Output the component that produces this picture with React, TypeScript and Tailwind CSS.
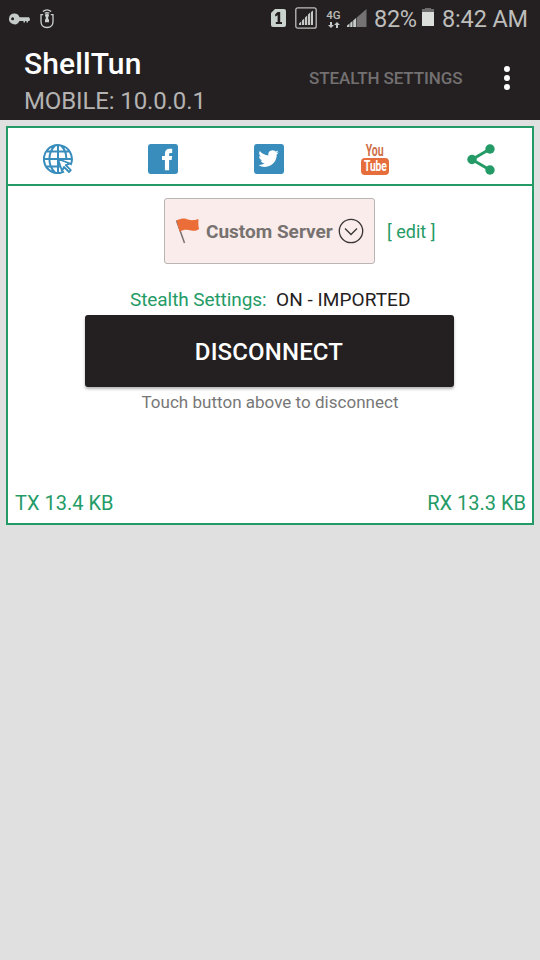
import React from "react";

function StatusBar() {
  return (
    <div className="flex h-[38px] items-center text-[#bdbdbb]">
      <svg className="ml-[9px] h-[12px] w-[21px] shrink-0" viewBox="0 0 21 12">
        <path fill="#c5cbc9" fillRule="evenodd" d="M5.5.5a5.4 5.4 0 1 0 4.9 7.500h4.100v1.500h1.500V8h1.500v1.500H19V8h1.500L21 6l-1-1.700h-9.400A5.400 5.400 0 0 0 5.500.5ZM3.600 4.300a1.500 1.500 0 1 1 0 3 1.500 1.500 0 0 1 0-3Z" />
      </svg>
      <svg className="ml-[10px] h-[20px] w-[14px] shrink-0" viewBox="0 0 14 20" fill="none" stroke="#cbd0ce" strokeWidth="1.300">
        <path d="M2.800 2.500Q7-.9 11.200 2.500M4.700 4.300Q7 2.800 9.300 4.300M3.200 5.700H1v6.800c0 3.800 2.500 6 6 6s6-2.200 6-6V5.700h-2.200" />
        <path stroke="none" fill="#cbd0ce" d="M7 4.500a2 2 0 0 1 1.200 3.600v2.100H9v3H5v-3h.8V8.100A2 2 0 0 1 7 4.500Z" />
      </svg>
      <svg className="ml-[217px] h-[18px] w-[15px] shrink-0 -translate-y-px" viewBox="0 0 15 18">
        <path fill="#cbd3cf" d="M4 0h9a2 2 0 0 1 2 2v14a2 2 0 0 1-2 2H2a2 2 0 0 1-2-2V4Z" />
        <path fill="#242021" d="M6.600 3h2.600v10h1.800v2H4.800v-2h1.800V6.300L4.200 7.500v-2.300Z" />
      </svg>
      <svg className="ml-[9px] h-[22px] w-[22px] shrink-0 -translate-y-px" viewBox="0 0 22 22">
        <rect x=".8" y=".8" width="20.400" height="20.400" rx="2" fill="none" stroke="#bdbdbb" strokeWidth="1.300" />
        <path fill="#c7c9c6" d="M4 18v-1.500l2.200-2V18zM7 18v-4.500l2.200-2V18zM10 18v-7.500l2.200-2V18zM13 18V7.500l2.200-2V18zM16 18V5l2-1.500V18z" />
      </svg>
      <div className="ml-[9px] flex w-[15px] shrink-0 -translate-y-px flex-col items-center">
        <span className="text-[11.500px] font-medium leading-[12px]">4G</span>
        <svg className="mt-[1px] h-[6px] w-[12px]" viewBox="0 0 12 6" fill="#c7c9c6">
          <path d="M2 0h2v3h2L3 6 0 3h2zM8 6h2V3h2L9 0 6 3h2z" />
        </svg>
      </div>
      <svg className="ml-[6px] h-[18px] w-[20px] shrink-0 -translate-y-px" viewBox="0 0 20 18">
        <path fill="#757273" d="M9.500 8.800 19.500 0v18h-10z" />
        <path fill="#c5cbc9" d="M0 18v-1.500l2.500-2V18zM3.200 18v-4l2.300-2v6zM6.200 18v-6.500L9 9v9z" />
      </svg>
      <span className="ml-[7px] w-[43px] shrink-0 whitespace-nowrap text-[23.500px] leading-6 tracking-[-.3px]">82%</span>
      <svg className="ml-[5px] h-[18px] w-[12px] shrink-0 -translate-y-0.5" viewBox="0 0 12 18">
        <path fill="#6f6c6d" d="M3 0h6v1h3v4H0V1h3z" />
        <path fill="#dcdedb" d="M0 4h12v14H0z" />
      </svg>
      <span className="ml-[8px] whitespace-nowrap text-[23.500px] leading-6 tracking-[-.15px]">8:42 AM</span>
    </div>
  );
}

function Header() {
  return (
    <header className="h-[120px] bg-[#242021]">
      <StatusBar />
      <div className="flex h-[82px] pl-[24px]">
        <div className="w-[285px] pt-[8px]">
          <h1 className="whitespace-nowrap text-[30px] font-medium leading-[36px] tracking-[.1px] text-white">ShellTun</h1>
          <p className="mt-[4px] whitespace-nowrap text-[24px] leading-[30px] tracking-[-.12px] text-[#b4b3b2]">MOBILE: 10.0.0.1</p>
        </div>
        <span className="mt-[30px] w-[194px] whitespace-nowrap text-[17px] font-medium leading-5 tracking-[-.1px] text-[#737071]">STEALTH SETTINGS</span>
        <button className="mt-[28px] flex h-[24px] w-[8px] flex-col items-center justify-between" aria-label="More options">
          <i className="size-[6px] rounded-full bg-white" />
          <i className="size-[6px] rounded-full bg-white" />
          <i className="size-[6px] rounded-full bg-white" />
        </button>
      </div>
    </header>
  );
}

function SocialLinks() {
  return (
    <nav className="flex h-[58px] items-center border-b-2 border-[#249b66] pl-[35px] pt-[6px]">
      <svg className="size-[30px]" viewBox="0 0 30 30" fill="none" stroke="#388dbd" strokeWidth="2">
        <path d="M27.600 21A14 14 0 1 0 21 27.700M4 7.500h22M1 15h28M4 22.500h14M15 1v28M12 1.500C4.500 9 4.500 21 12 28.500M18 1.500c4 4 5.500 8.700 5.300 13.500" />
        <path fill="white" strokeWidth="1.800" strokeLinejoin="round" d="m15 15 12 4.500-4.200 1.700 5 5-1.800 1.800-5-5L19 27Z" />
      </svg>
      <svg className="ml-[75px] size-[30px]" viewBox="0 0 31 31">
        <rect width="31" height="31" rx="3" fill="#388dbd" />
        <path fill="white" d="M17.500 27V16.500h-3v-4h3V10c0-3.500 1.800-5 5-5H25v4.200h-1.500c-1.300 0-1.700.5-1.700 1.600v1.700H25l-.6 4h-2.600V27Z" />
      </svg>
      <svg className="ml-[76px] size-[30px]" viewBox="0 0 31 31">
        <rect width="31" height="31" rx="3" fill="#388dbd" />
        <path transform="translate(4.500 4.500) scale(.88)" fill="white" d="M23.950 4.570a10 10 0 0 1-2.820.77 4.960 4.960 0 0 0 2.160-2.720c-.95.550-2 .950-3.120 1.180a4.920 4.920 0 0 0-8.380 4.480C7.690 8.090 4.070 6.130 1.640 3.160a4.820 4.820 0 0 0-.67 2.480c0 1.710.87 3.210 2.190 4.100a4.900 4.900 0 0 1-2.230-.62v.06a4.920 4.920 0 0 0 3.950 4.830 5 5 0 0 1-2.210.08 4.940 4.940 0 0 0 4.600 3.420A9.870 9.870 0 0 1 0 19.540a14 14 0 0 0 7.550 2.210c9.050 0 14-7.500 14-13.980 0-.21 0-.42-.02-.63a9.940 9.940 0 0 0 2.420-2.570Z" />
      </svg>
      <div className="ml-[77px] flex w-[28px] flex-col items-center">
        <span className="h-[14px] scale-x-[.66] whitespace-nowrap text-[16px] font-bold leading-[13px] text-[#cf7048]">You</span>
        <span className="flex h-[17px] w-[28px] items-center justify-center rounded-[4px] bg-[#e66d3c]">
          <span className="scale-x-[.66] whitespace-nowrap text-[15.500px] font-bold leading-[16px] text-white">Tube</span>
        </span>
      </div>
      <svg className="ml-[78px] h-[31px] w-[28px]" viewBox="0 0 28 31" fill="#249b66">
        <path d="M23 5 5 15.500 23 26" fill="none" stroke="#249b66" strokeWidth="3" />
        <circle cx="23" cy="5" r="4.700" /><circle cx="5" cy="15.500" r="4.700" /><circle cx="23" cy="26" r="4.700" />
      </svg>
    </nav>
  );
}

function ServerPicker() {
  return (
    <div className="mt-[12px] flex items-center pl-[156px]">
      <button className="flex h-[66px] w-[211px] items-center rounded-[3px] border border-[#b9b5b5] bg-[#f9eceb] pl-[10px]">
        <svg className="h-[26px] w-[26px] shrink-0" viewBox="0 0 26 26">
          <path d="m1.500 2.500 8 22.500" stroke="#77716f" strokeWidth="1.500" />
          <path fill="#eb6d37" d="M1.500 2.500C8-.5 10 .5 13 1.500s6 1 10.500-.5c-.3 3-.3 7 .7 10-3 2-5 2-8 1.500-4-.8-7-1.500-11.500 1.200Z" />
        </svg>
        <span className="ml-[5px] mt-[2px] w-[128px] whitespace-nowrap text-left text-[19px] font-bold leading-6 text-[#777270]">Custom Server</span>
        <svg className="ml-[4px] size-[26px] shrink-0" viewBox="0 0 26 26" fill="none" stroke="#393534" strokeWidth="1.300">
          <circle cx="13" cy="13" r="11.700" /><path d="m7 10.500 6 6 6-6" />
        </svg>
      </button>
      <a className="ml-[12px] mt-[2px] whitespace-nowrap text-[18px] leading-6 text-[#249b66]">[ edit ]</a>
    </div>
  );
}

export default function App() {
  return (
    <div className="min-h-[960px] w-[540px] overflow-hidden bg-[#e0e0e0] font-['Roboto',sans-serif]">
      <Header />
      <main className="mx-[6px] mt-[6px] flex h-[399px] flex-col border-2 border-[#249b66] bg-white">
        <SocialLinks />
        <ServerPicker />
        <div className="mt-[24px] flex h-[24px] whitespace-nowrap pl-[122px] text-[19px] leading-6">
          <span className="w-[146px] tracking-[-.08px] text-[#249b66]">Stealth Settings:</span>
          <span className="tracking-[.06px] text-[#242021]">ON - IMPORTED</span>
        </div>
        <button className="ml-[77px] mt-[3px] h-[72px] w-[369px] shrink-0 rounded-[3px] bg-[#242021] pr-[1px] pt-[2px] text-[24px] font-medium leading-7 tracking-[.15px] text-white shadow-[0_2px_3px_rgba(0,0,0,.3)]">DISCONNECT</button>
        <p className="mt-[4px] text-center text-[17px] leading-[22px] tracking-[.02px] text-[#777]">Touch button above to disconnect</p>
        <div className="mt-auto flex justify-between pb-[8px] pl-[7px] pr-[6px] text-[20px] leading-6 text-[#249b66]">
          <span>TX 13.4 KB</span>
          <span>RX 13.3 KB</span>
        </div>
      </main>
    </div>
  );
}
